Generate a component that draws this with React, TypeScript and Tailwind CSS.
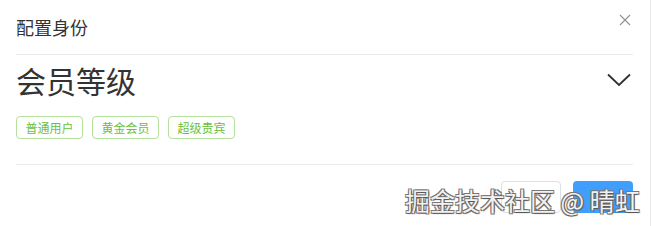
const levels = ["普通用户", "黄金会员", "超级贵宾"];

export default function App() {
  return (
    <div
      className="relative w-[651px] h-[226px] bg-white border-r border-[#e6e6e6] overflow-hidden"
      style={{ fontFamily: '"Noto Sans CJK SC", "Noto Sans", sans-serif' }}
    >
      {/* HEADER */}
      <div className="flex items-center justify-between h-[54px] pl-4 pr-[19px]">
        <span className="text-[18px] leading-none text-[#333]">配置身份</span>
        <svg width="12" height="12" viewBox="0 0 12 12" className="mb-[14px]">
          <path d="M1 1 L11 11 M11 1 L1 11" stroke="#909399" strokeWidth="1.2" fill="none" />
        </svg>
      </div>
      <div className="ml-4 mr-[17px] border-t border-[#ebebeb]" />

      {/* BODY */}
      <div className="ml-4 mr-[17px]">
        <div className="flex items-center justify-between h-[50px]">
          <span className="text-[30px] leading-none text-[#333]">会员等级</span>
          <svg width="24" height="14" viewBox="0 0 24 14" className="mr-[2px]">
            <path d="M1 1.5 L12 12 L23 1.5" stroke="#303133" strokeWidth="1.8" fill="none" />
          </svg>
        </div>

        <div className="flex gap-[9px] mt-[11px]">
          {levels.map((l) => (
            <span
              key={l}
              className="w-[67px] h-[23px] flex items-center justify-center rounded-[4px] border border-[#b3e19d] bg-white text-[12px] leading-none text-[#67c23a]"
            >
              {l}
            </span>
          ))}
        </div>

        <div className="mt-[25px] border-t border-[#ebebeb]" />

        {/* FOOTER */}
        <div className="flex justify-end gap-[12px] pt-4">
          <button className="w-[60px] h-[32px] rounded-[4px] border border-[#dcdfe6] bg-white" />
          <button className="w-[60px] h-[32px] rounded-[4px] bg-[#409eff]" />
        </div>
      </div>

      {/* WATERMARK */}
      <div className="absolute left-[405px] top-[184px] text-[25px] leading-[32px] whitespace-nowrap text-[#f2f2f2] [text-shadow:1px_1px_1px_#555,-1px_-1px_0_#777,1px_-1px_0_#777,-1px_1px_0_#777]">
        掘金技术社区 @ 晴虹
      </div>
    </div>
  );
}
